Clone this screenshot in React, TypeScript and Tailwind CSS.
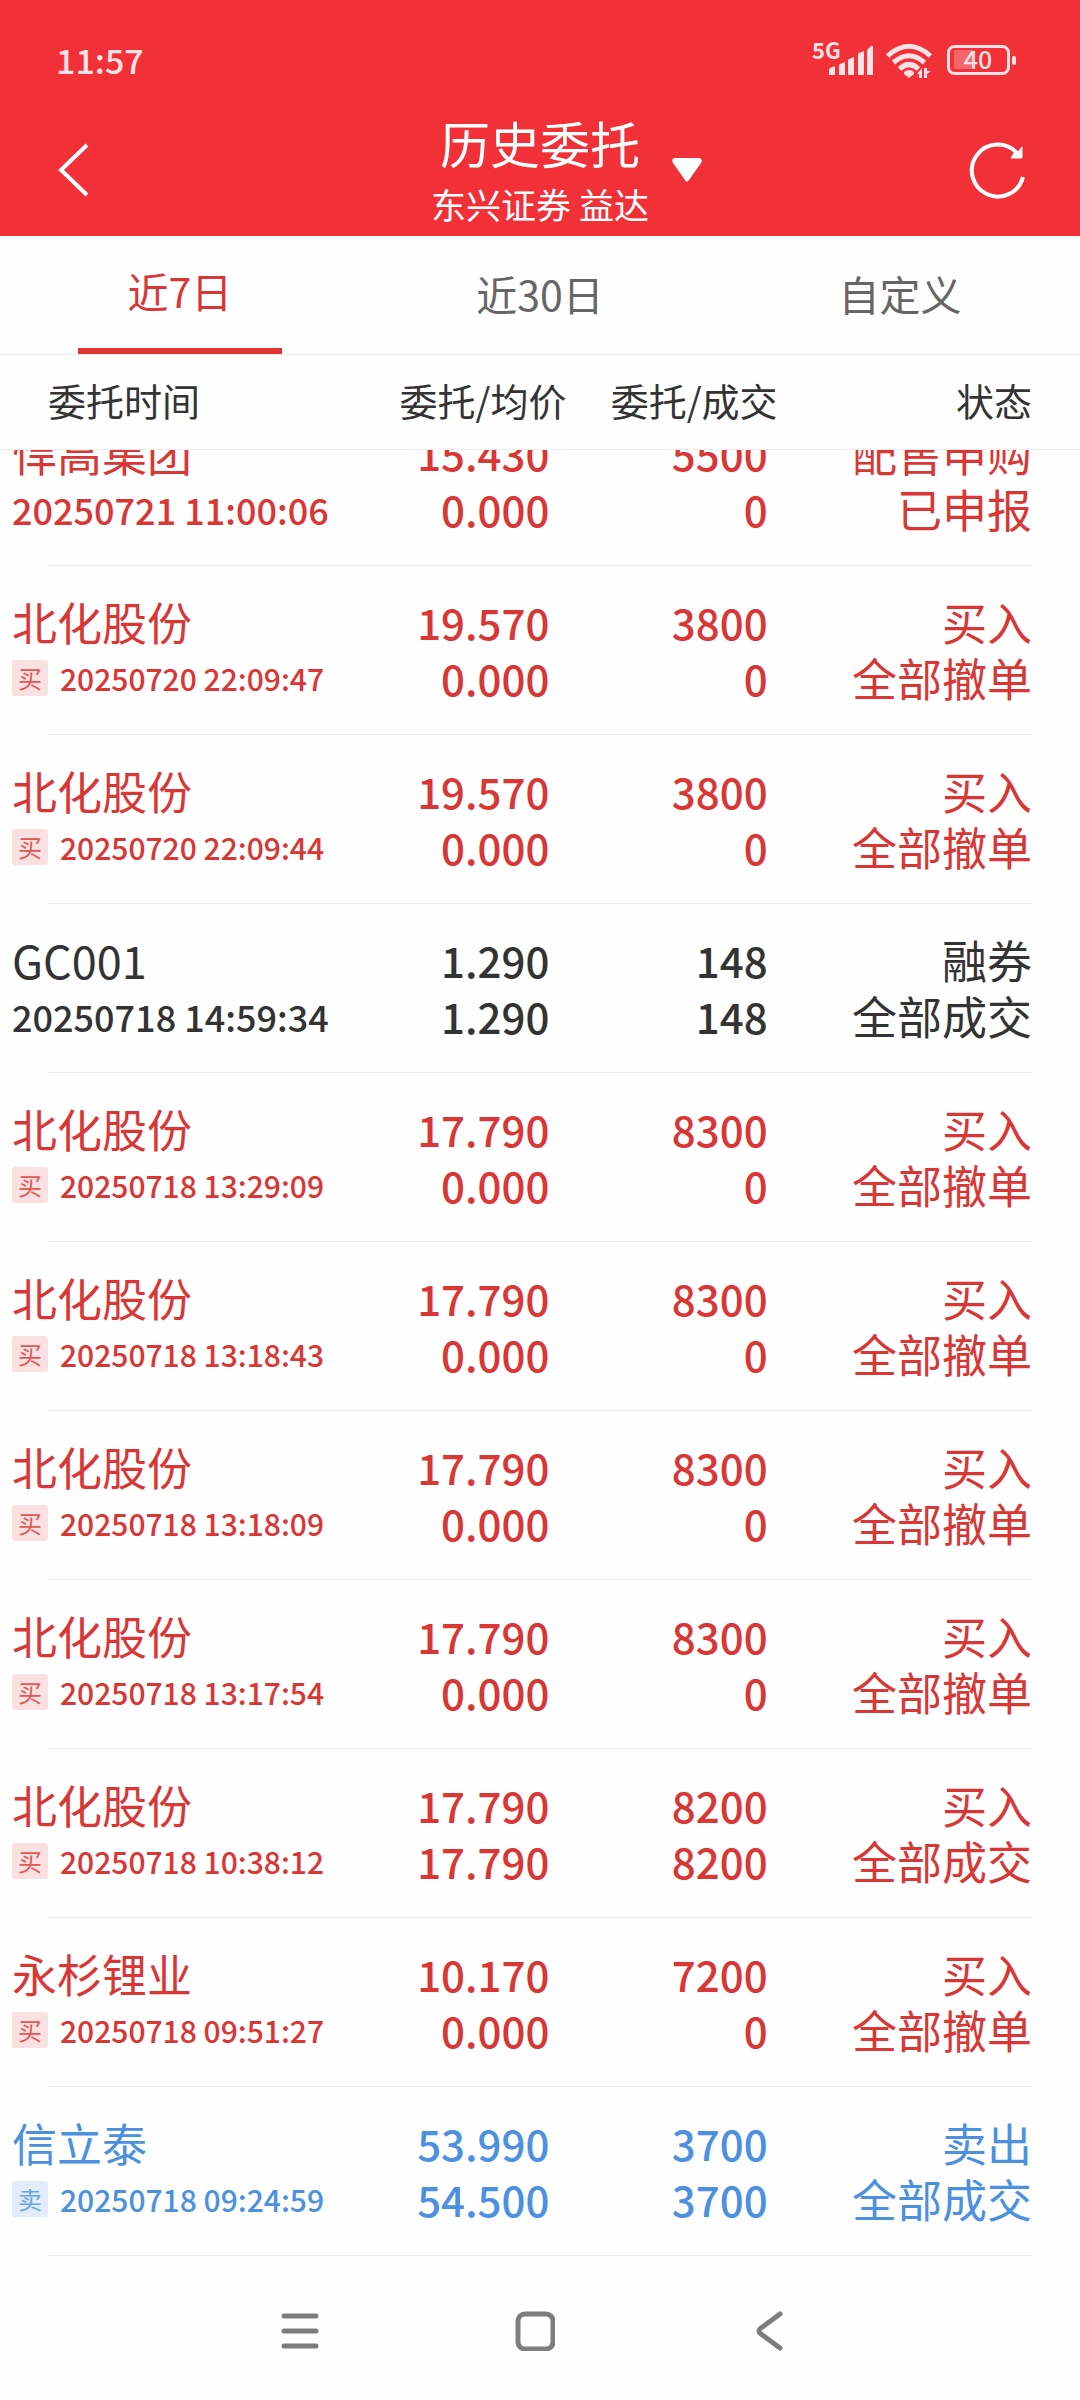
import { useState } from "react";

type Order = {
  name: string;
  time: string;
  tag?: string;
  price: [string, string];
  amount: [string, string];
  status: [string, string];
};

const orders: Order[] = [
  { name: "悍高集团", time: "20250721 11:00:06", price: ["15.430", "0.000"], amount: ["5500", "0"], status: ["配售申购", "已申报"] },
  { name: "北化股份", time: "20250720 22:09:47", tag: "买", price: ["19.570", "0.000"], amount: ["3800", "0"], status: ["买入", "全部撤单"] },
  { name: "北化股份", time: "20250720 22:09:44", tag: "买", price: ["19.570", "0.000"], amount: ["3800", "0"], status: ["买入", "全部撤单"] },
  { name: "GC001", time: "20250718 14:59:34", price: ["1.290", "1.290"], amount: ["148", "148"], status: ["融券", "全部成交"] },
  { name: "北化股份", time: "20250718 13:29:09", tag: "买", price: ["17.790", "0.000"], amount: ["8300", "0"], status: ["买入", "全部撤单"] },
  { name: "北化股份", time: "20250718 13:18:43", tag: "买", price: ["17.790", "0.000"], amount: ["8300", "0"], status: ["买入", "全部撤单"] },
  { name: "北化股份", time: "20250718 13:18:09", tag: "买", price: ["17.790", "0.000"], amount: ["8300", "0"], status: ["买入", "全部撤单"] },
  { name: "北化股份", time: "20250718 13:17:54", tag: "买", price: ["17.790", "0.000"], amount: ["8300", "0"], status: ["买入", "全部撤单"] },
  { name: "北化股份", time: "20250718 10:38:12", tag: "买", price: ["17.790", "17.790"], amount: ["8200", "8200"], status: ["买入", "全部成交"] },
  { name: "永杉锂业", time: "20250718 09:51:27", tag: "买", price: ["10.170", "0.000"], amount: ["7200", "0"], status: ["买入", "全部撤单"] },
  { name: "信立泰", time: "20250718 09:24:59", tag: "卖", price: ["53.990", "54.500"], amount: ["3700", "3700"], status: ["卖出", "全部成交"] },
];

const tabs = ["近7日", "近30日", "自定义"];

function rowColor(o: Order) {
  if (o.status[0] === "融券") return "text-[#333333]";
  if (o.tag === "卖") return "text-[#4c90e0]";
  return "text-[#d93636]";
}

function StatusIcons() {
  return (
    <svg width="206" height="40" viewBox="811 40 206 40" fill="#ffe3e4" aria-hidden="true">
      <text x="812" y="59" fontSize="22" fontWeight="700" fontFamily="Noto Sans CJK SC, sans-serif">5G</text>
      {/* Signal */}
      <path d="M829 75v-5q0-1 1-2l5-2v9zM839 75V65l1-1 5-2v13zM848 75V60l1-1 5-2v18zM858 75V54l1-1 5-2v24zM867 75V50l1-1 3-3h2v29z" />
      {/* Wi-Fi */}
      <g fill="none" stroke="#ffe3e4" strokeWidth="5">
        <path d="M887.500 56Q909 36.500 930.500 56" />
        <path d="M893.500 62.500Q909 49 924.500 62.500" />
        <path d="M899.500 69Q909 60 918.500 69" />
      </g>
      <path d="M904 72q5-4 10 0v2l-5 4-5-4z" />
      <path d="M917 74l5-6v10h-3v-4zM924 68h3v3h4l-4 3v4h-3z" />
      {/* Battery */}
      <rect x="954" y="50" width="20" height="19" rx="2" fill="#f4656b" />
      <rect x="948.500" y="46.500" width="60" height="27" rx="6" fill="none" stroke="#ffe3e4" strokeWidth="3" />
      <rect x="1012" y="56" width="4" height="9" rx="2" />
      <text x="978" y="69" fontSize="25" fontWeight="500" textAnchor="middle" fontFamily="Noto Sans CJK SC, sans-serif">40</text>
    </svg>
  );
}

function OrderRow({ order, clipped }: { order: Order; clipped: boolean }) {
  // the first row is partly scrolled under the table head
  const cell = `flex flex-col justify-end overflow-hidden pb-[29px] ${clipped ? "h-[116px]" : "h-[169px]"}`;
  const line = "h-14 shrink-0 leading-14";
  return (
    <tr className={`relative after:absolute after:inset-x-[47px] after:bottom-0 after:h-px after:bg-[#ececec] ${rowColor(order)}`}>
      <td className="p-0">
        <div className={`${cell} pl-3`}>
          <div className={`${line} text-[45px]`}>{order.name}</div>
          {order.tag ? (
            <div className={`${line} flex items-center gap-3 text-[30px] font-medium`}>
              <span
                className={`flex size-9 items-center justify-center rounded-[3px] text-[24px] font-normal ${
                  order.tag === "卖" ? "bg-[#e1edfa]" : "bg-[#fae0e0]"
                }`}
              >
                <span className="opacity-80">{order.tag}</span>
              </span>
              {order.time}
            </div>
          ) : (
            <div className={`${line} text-[36px] font-medium`}>{order.time}</div>
          )}
        </div>
      </td>
      <td className="p-0">
        <div className={`${cell} pr-[23px] text-right text-[42px] font-medium`}>
          {order.price.map((p, i) => <div key={i} className={line}>{p}</div>)}
        </div>
      </td>
      <td className="p-0">
        <div className={`${cell} pr-[10px] text-right text-[42px] font-medium`}>
          {order.amount.map((a, i) => <div key={i} className={line}>{a}</div>)}
        </div>
      </td>
      <td className="p-0">
        <div className={`${cell} pr-12 text-right text-[45px]`}>
          {order.status.map((s, i) => <div key={i} className={line}>{s}</div>)}
        </div>
      </td>
    </tr>
  );
}

export default function App() {
  const [active, setActive] = useState(0);

  return (
    <main className="flex min-h-screen flex-col bg-[#fefefe] font-['Noto_Sans_CJK_SC',sans-serif]">
      <header className="bg-[#f13037] text-white">
        {/* Status bar */}
        <div className="flex h-28 items-center justify-between pt-2 pr-[63px] pl-14 text-[#ffe3e4]">
          <span className="text-[34px] leading-10 font-medium">11:57</span>
          <StatusIcons />
        </div>
        {/* Title bar */}
        <div className="grid h-[124px] grid-cols-[1fr_auto_1fr]">
          <button type="button" aria-label="返回" className="flex h-29 items-center justify-self-start pl-14">
            <svg width="34" height="56" viewBox="0 0 34 56" fill="none" stroke="currentColor" strokeWidth="4">
              <path d="M31 3L5 28l26 25" />
            </svg>
          </button>
          <div className="text-center">
            <h1 className="text-[50px] leading-15">历史委托</h1>
            <p className="text-[35px] leading-16">东兴证券 益达</p>
          </div>
          <div className="flex h-29 items-center justify-between pr-[54px] pl-[23px]">
            <button type="button" aria-label="切换账户">
              <svg width="30" height="24" viewBox="0 0 30 24" fill="currentColor">
                <path d="M2 0h26q3 2 1 5L17 22q-2 3-4 0L1 5q-2-3 1-5z" />
              </svg>
            </button>
            <button type="button" aria-label="刷新">
              <svg width="58" height="60" viewBox="0 0 58 60" fill="none" stroke="currentColor" strokeWidth="4">
                <path d="M55 37A26 26 0 1 1 49 13" />
                <path d="M54 7v11H43l3-5 4-1z" fill="currentColor" strokeWidth="1" />
              </svg>
            </button>
          </div>
        </div>
      </header>

      <nav className="grid h-[119px] grid-cols-3 border-b border-[#ececec] text-[41px]">
        {tabs.map((tab, i) => (
          <button
            key={tab}
            type="button"
            onClick={() => setActive(i)}
            className={`flex justify-center ${i === active ? "text-[#d93636]" : "text-[#666666]"}`}
          >
            <span
              className={`flex h-full w-[204px] items-center justify-center pb-[2px] ${
                i === active ? "border-b-6 border-[#e03535]" : ""
              }`}
            >
              {tab}
            </span>
          </button>
        ))}
      </nav>

      <table className="w-full table-fixed border-collapse">
        <thead>
          <tr className="h-[94px] border-b border-[#ececec] text-[38px] text-[#333333]">
            <th className="w-[33%] p-0 pb-[5px] pl-12 text-left font-normal">委托时间</th>
            {/* price and amount heads hang a little wider than their numbers */}
            <th className="w-[20%] p-0 pr-[6px] pb-[5px] text-right font-normal whitespace-nowrap">委托/均价</th>
            <th className="w-[19%] p-0 pb-[5px] text-right font-normal whitespace-nowrap">委托/成交</th>
            <th className="w-[28%] p-0 pr-12 pb-[5px] text-right font-normal">状态</th>
          </tr>
        </thead>
        <tbody>
          {orders.map((order, i) => (
            <OrderRow key={order.time} order={order} clipped={i === 0} />
          ))}
        </tbody>
      </table>

      {/* System navigation */}
      <footer className="flex items-center justify-center gap-[195px] pt-[55px] pr-[10px] text-[#7d7d7d]">
        <button type="button" aria-label="最近任务">
          <svg width="40" height="40" viewBox="0 0 40 40" fill="none" stroke="currentColor" strokeWidth="5" strokeLinecap="round">
            <path d="M4 5h32M4 20h32M4 35h32" />
          </svg>
        </button>
        <button type="button" aria-label="主屏幕">
          <svg width="40" height="40" viewBox="0 0 40 40" fill="none" stroke="currentColor" strokeWidth="5">
            <rect x="3" y="3" width="35" height="35" rx="7" />
          </svg>
        </button>
        <button type="button" aria-label="返回上一级">
          <svg width="40" height="40" viewBox="0 0 40 40" fill="none" stroke="currentColor" strokeWidth="5" strokeLinecap="round">
            <path d="M30 3L11 17q-4 3 0 6l19 14" />
          </svg>
        </button>
      </footer>
    </main>
  );
}
